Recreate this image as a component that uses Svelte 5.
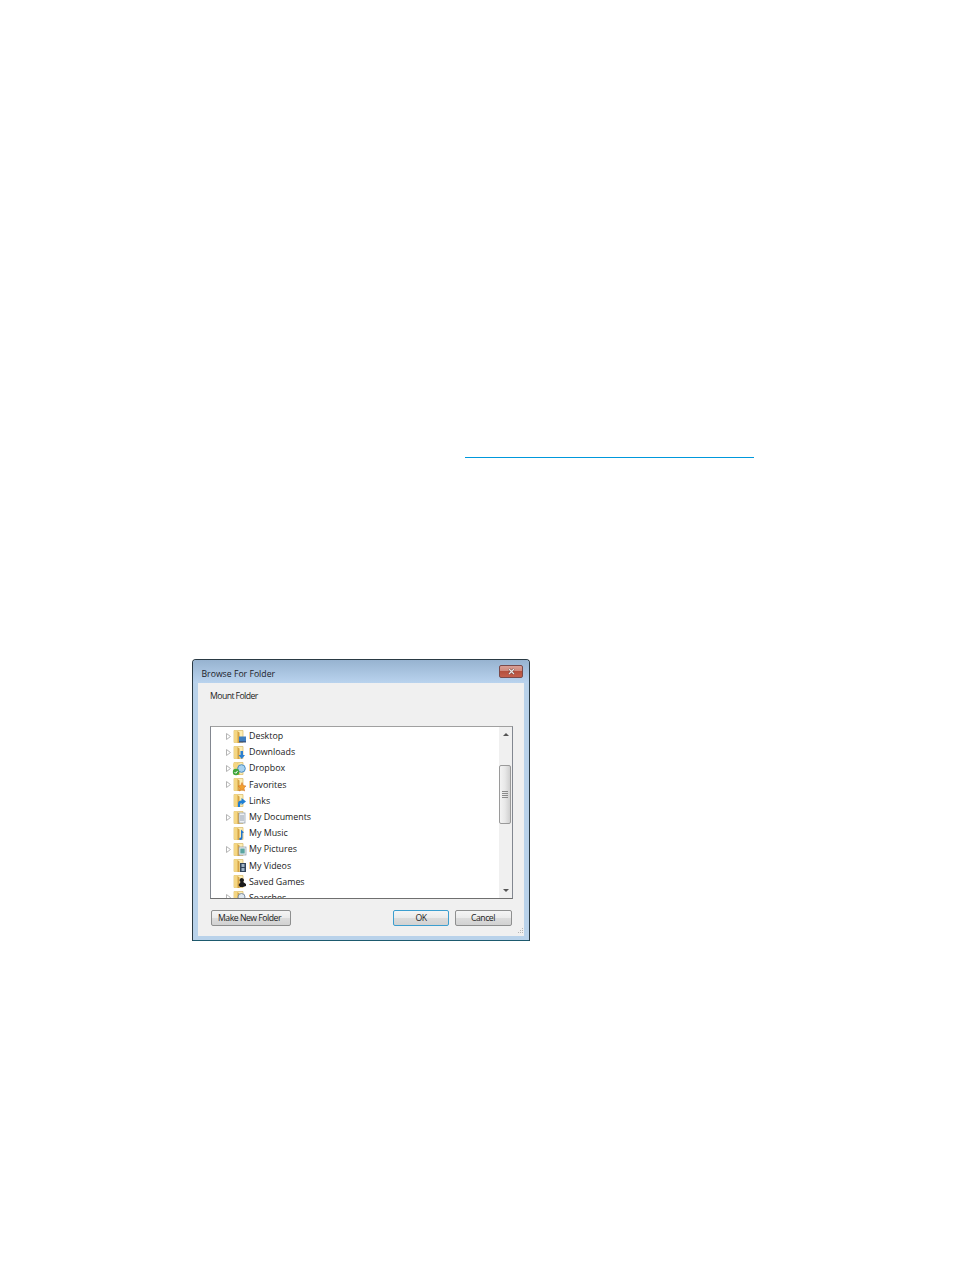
<script>
  const folders = [
    { name: 'Desktop', arrow: true, kind: 'desktop' },
    { name: 'Downloads', arrow: true, kind: 'downloads' },
    { name: 'Dropbox', arrow: true, kind: 'dropbox' },
    { name: 'Favorites', arrow: true, kind: 'favorites' },
    { name: 'Links', arrow: false, kind: 'links' },
    { name: 'My Documents', arrow: true, kind: 'documents' },
    { name: 'My Music', arrow: false, kind: 'music' },
    { name: 'My Pictures', arrow: true, kind: 'pictures' },
    { name: 'My Videos', arrow: false, kind: 'videos' },
    { name: 'Saved Games', arrow: false, kind: 'games' },
    { name: 'Searches', arrow: true, kind: 'searches' }
  ];
</script>

<div class="page">
  <div class="rule"></div>

  <div class="window">
    <div class="titlebar">
      <span class="title">Browse For Folder</span>
      <button class="close" aria-label="Close">
        <svg width="11" height="7" viewBox="0 0 11 7">
          <path d="M3 1 L8 6 M8 1 L3 6" stroke="#6b3a34" stroke-width="2.4" />
          <path d="M3 1 L8 6 M8 1 L3 6" stroke="#ece8e6" stroke-width="1.3" />
        </svg>
      </button>
    </div>

    <div class="client">
      <div class="label">Mount Folder</div>

      <div class="tree">
        <ul class="rows">
          {#each folders as f}
            <li>
              <span class="arrow">
                {#if f.arrow}
                  <svg width="5" height="7" viewBox="0 0 5 7">
                    <path d="M0.5 0.5 L4.5 3.5 L0.5 6.5 Z" fill="#fff" stroke="#b4b4b4" />
                  </svg>
                {/if}
              </span>
              <svg class="icon" width="15" height="15" viewBox="0 0 15 15">
                <path d="M2 1.5 H11 V13.5 H2 Z" fill="#fdeeb4" stroke="#d9b765" stroke-width="0.7" />
                <path d="M2 1.5 H6 V13.5 H2 Z" fill="#f4d683" />
                <path d="M5.5 2 L7.5 3.5 V14 H5.5 Z" fill="#d6a445" />
                {#if f.kind === 'desktop'}
                  <rect x="7" y="7.5" width="7" height="5" fill="#3f7fc0" />
                  <rect x="7" y="12" width="7" height="1.5" fill="#3a5a86" />
                {:else if f.kind === 'downloads'}
                  <path d="M8.5 6 H11 V10 H13 L9.7 14 L6.5 10 H8.5 Z" fill="#2b7fd0" />
                {:else if f.kind === 'dropbox'}
                  <path d="M1 2.5 H8 V6 H1 Z" fill="#f4d683" />
                  <circle cx="9.5" cy="7.5" r="3.8" fill="#a8d2ef" stroke="#4a8dc4" />
                  <circle cx="4" cy="11" r="3.2" fill="#3fa63c" />
                  <path d="M2.5 11 L3.8 12.3 L5.6 9.9" stroke="#fff" fill="none" />
                {:else if f.kind === 'favorites'}
                  <path d="M10 5.5 L11.2 8.5 L14 9 L12 11 L12.6 14 L10 12.5 L7.4 14 L8 11 L6 9 L8.8 8.5 Z" fill="#f0a030" stroke="#d2691e" stroke-width="0.5" />
                {:else if f.kind === 'links'}
                  <path d="M6 14 V10.5 Q6 7.5 9.5 7.5 V5 L14 8.5 L9.5 12 V10 Q8 10 8 14 Z" fill="#1f7fd4" />
                {:else if f.kind === 'documents'}
                  <rect x="7" y="3" width="6" height="10" fill="#eef1f4" stroke="#8a97a6" stroke-width="0.7" />
                  <path d="M8 6 H12 M8 8 H12 M8 10 H12" stroke="#7d8ea0" stroke-width="0.8" />
                {:else if f.kind === 'music'}
                  <path d="M9 3.5 L12 6.5 L10.5 7 V12 Q10.5 14.3 8 14 Q6.5 13.5 7.5 12 Q8.5 11.3 9 11.8 Z" fill="#2175cf" />
                {:else if f.kind === 'pictures'}
                  <rect x="7" y="5" width="7" height="8" fill="#eef1f2" stroke="#8a97a6" stroke-width="0.7" />
                  <rect x="8.3" y="6.5" width="4.4" height="5" fill="#5aa5a0" />
                {:else if f.kind === 'videos'}
                  <rect x="8" y="5" width="6" height="9" fill="#34465a" />
                  <rect x="9.5" y="6" width="3" height="3" fill="#9fb4c8" />
                  <rect x="9.5" y="10" width="3" height="3" fill="#9fb4c8" />
                {:else if f.kind === 'games'}
                  <path d="M9.5 4 Q12 4 12 6.5 L11.2 8 L14 10 V12 L11 13 H8 L6.5 11 L8.5 8 L7.5 6.5 Q7.5 4 9.5 4 Z" fill="#1c1c1c" />
                {:else}
                  <circle cx="9.5" cy="7" r="3.5" fill="#dfe7ee" stroke="#7d8ea0" />
                  <path d="M7 10 L4.5 13" stroke="#7d8ea0" stroke-width="1.5" />
                {/if}
              </svg>
              <span class="name">{f.name}</span>
            </li>
          {/each}
        </ul>

        <div class="scrollbar">
          <svg class="sb-arrow" width="6" height="3" viewBox="0 0 6 3"><path d="M3 0 L6 3 H0 Z" fill="#555" /></svg>
          <div class="thumb">
            <span class="grip"></span>
            <span class="grip"></span>
            <span class="grip"></span>
            <span class="grip"></span>
          </div>
          <svg class="sb-arrow" width="6" height="3" viewBox="0 0 6 3"><path d="M0 0 H6 L3 3 Z" fill="#555" /></svg>
        </div>
      </div>

      <div class="actions">
        <button class="btn new">Make New Folder</button>
        <div class="right">
          <button class="btn ok">OK</button>
          <button class="btn cancel">Cancel</button>
        </div>
      </div>

      <svg class="resize" width="9" height="9" viewBox="0 0 9 9">
        <path d="M7 1h1v1H7z M5 3h1v1H5z M7 3h1v1H7z M3 5h1v1H3z M5 5h1v1H5z M7 5h1v1H7z" fill="#b5b5b5" />
      </svg>
    </div>
  </div>
</div>

<style>
  :global(body) {
    margin: 0;
    background: #fff;
  }

  .page {
    height: 1270px;
    padding-top: 457px;
    box-sizing: border-box;
    font-family: 'Open Sans', 'Liberation Sans', sans-serif;
    overflow: hidden;
  }

  .rule {
    width: 289px;
    height: 1px;
    margin-left: 465px;
    background: #0098dc;
  }

  .window {
    width: 338px;
    height: 282px;
    margin: 201px 0 0 192px;
    box-sizing: border-box;
    border: 1px solid #2a3a44;
    border-bottom-color: #1d5a6e;
    border-radius: 4px 4px 0 0;
    padding: 0 5px 4px;
    display: flex;
    flex-direction: column;
    background: #b9d2ea;
  }

  .titlebar {
    height: 23px;
    flex: none;
    display: flex;
    align-items: center;
    justify-content: space-between;
    background: linear-gradient(180deg, #97b3d0, #b9d3ee);
    margin: 0 -5px;
    padding-left: 9px;
    padding-right: 6px;
    border-radius: 3px 3px 0 0;
  }

  .title {
    font-size: 8.7px;
    color: #1b2128;
    position: relative;
    top: 2px;
    left: -0.5px;
  }

  .close {
    width: 24px;
    height: 13px;
    padding: 0;
    border: 1px solid #7a4a4a;
    border-radius: 2px;
    background: linear-gradient(180deg, #d9a096 0, #cf8a7d 45%, #b5503d 50%, #c4604c 100%);
    display: flex;
    align-items: center;
    justify-content: center;
  }

  .client {
    flex: 1;
    position: relative;
    background: #f0f0f0;
    padding: 0 11px 0 12px;
    display: flex;
    flex-direction: column;
  }

  .label {
    font-size: 8.7px;
    letter-spacing: -0.58px;
    color: #1c1c1c;
    height: 43px;
    padding-top: 7px;
    box-sizing: border-box;
  }

  .tree {
    height: 173px;
    flex: none;
    box-sizing: border-box;
    border: 1px solid #828790;
    border-top-color: #a0a0a0;
    border-bottom-color: #6f6f6f;
    background: #fff;
    display: flex;
    overflow: hidden;
  }

  .rows {
    flex: 1;
    list-style: none;
    margin: 0;
    padding: 1px 0 0;
  }

  .rows li {
    height: 16.2px;
    display: flex;
    align-items: center;
  }

  .arrow {
    width: 5px;
    height: 7px;
    margin-left: 15px;
    flex: none;
    display: flex;
  }

  .icon {
    margin-left: 1px;
    flex: none;
  }

  .name {
    margin-left: 2px;
    font-size: 8.85px;
    color: #1a1a1a;
    white-space: nowrap;
  }

  .scrollbar {
    width: 13px;
    flex: none;
    background: #f0f0f0;
    position: relative;
    display: flex;
    flex-direction: column;
    align-items: center;
    justify-content: space-between;
    padding: 6px 0;
    box-sizing: border-box;
  }

  .thumb {
    position: absolute;
    top: 38px;
    left: 0;
    width: 12px;
    height: 59px;
    box-sizing: border-box;
    border: 1px solid #9a9a9a;
    border-radius: 2px;
    background: linear-gradient(90deg, #f3f3f3, #e8e8e8 50%, #d0d0d0);
    display: flex;
    flex-direction: column;
    align-items: center;
    justify-content: center;
    gap: 1px;
  }

  .grip {
    width: 6px;
    height: 1px;
    background: #8a8a8a;
  }

  .actions {
    display: flex;
    justify-content: space-between;
    margin-top: 11px;
    padding: 0 1px;
  }

  .right {
    display: flex;
    gap: 6px;
  }

  .btn {
    height: 16px;
    padding: 1px 0 0;
    font-family: inherit;
    font-size: 8.7px;
    letter-spacing: -0.5px;
    color: #1c1c1c;
    border: 1px solid #8e8f8f;
    border-radius: 2px;
    background: linear-gradient(180deg, #f5f5f5 0, #ebebeb 48%, #dcdcdc 52%, #d2d2d2 100%);
    line-height: 13px;
  }

  .new {
    width: 80px;
    padding-right: 3px;
  }

  .ok {
    width: 56px;
    border-color: #3c9ecf;
  }

  .cancel {
    width: 57px;
    padding-right: 1px;
  }

  .resize {
    position: absolute;
    right: 0;
    bottom: 0;
  }
</style>
